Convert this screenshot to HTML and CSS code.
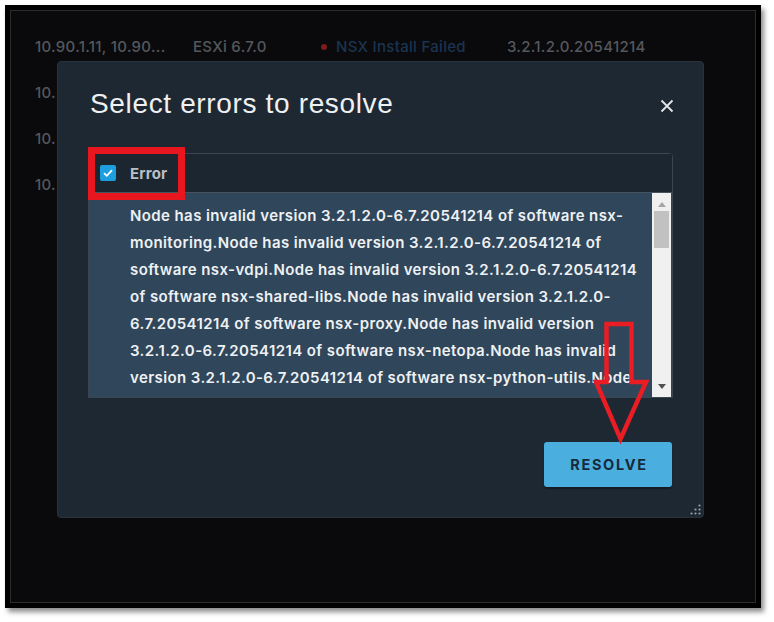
FILE: index.html
```html
<!DOCTYPE html>
<html>
<head>
<meta charset="utf-8">
<link rel="stylesheet" href="styles.css">
</head>
<body>
<div class="frame">
  <div class="screen">
    <div class="rows">
      <div class="row">
        <span class="cell">10.90.1.11, 10.90...</span>
        <span class="cell">ESXi 6.7.0</span>
        <span class="cell status"><i class="dot"></i>NSX Install Failed</span>
        <span class="cell">3.2.1.2.0.20541214</span>
      </div>
      <div class="row"><span class="cell">10.</span></div>
      <div class="row"><span class="cell">10.</span></div>
      <div class="row"><span class="cell">10.</span></div>
    </div>

    <div class="modal">
      <div class="modal-head">
        <h1 class="title">Select errors to resolve</h1>
        <svg class="close" width="14" height="14" viewBox="0 0 14 14"><path d="M1.5 1.5 L12.5 12.5 M12.5 1.5 L1.5 12.5" stroke="#e4e7ea" stroke-width="1.8" fill="none"/></svg>
      </div>
      <div class="table">
        <div class="thead">
          <span class="cb"><svg width="16" height="16" viewBox="0 0 16 16"><path d="M4 8.2 L6.8 10.8 L12 5.2" stroke="#ffffff" stroke-width="1.8" fill="none"/></svg></span>
          <span class="th">Error</span>
        </div>
        <div class="tbody">
          <p class="msg">Node has invalid version 3.2.1.2.0-6.7.20541214 of software nsx-<br>monitoring.Node has invalid version 3.2.1.2.0-6.7.20541214 of<br>software nsx-vdpi.Node has invalid version 3.2.1.2.0-6.7.20541214<br>of software nsx-shared-libs.Node has invalid version 3.2.1.2.0-<br>6.7.20541214 of software nsx-proxy.Node has invalid version<br>3.2.1.2.0-6.7.20541214 of software nsx-netopa.Node has invalid<br>version 3.2.1.2.0-6.7.20541214 of software nsx-python-utils.Node</p>
          <div class="scrollbar">
            <svg class="sb-up" width="8" height="5" viewBox="0 0 8 5"><path d="M0 5 L4 0 L8 5 Z" fill="#a6a6a6"/></svg>
            <div class="sb-track"><div class="sb-thumb"></div></div>
            <svg class="sb-down" width="8" height="5" viewBox="0 0 8 5"><path d="M0 0 L8 0 L4 5 Z" fill="#505050"/></svg>
          </div>
        </div>
      </div>
      <div class="foot">
        <button class="btn">RESOLVE</button>
      </div>

      <div class="highlight"></div>
      <svg class="arrow" width="64" height="128" viewBox="0 0 64 128"><path d="M14.5 6 L39.5 6 L39.5 64 L54 64 L28.5 121 L4 64 L14.5 64 Z" fill="none" stroke="#ea1c24" stroke-width="4.5" stroke-linejoin="miter"/></svg>
      <svg class="grip" width="14" height="14" viewBox="0 0 14 14" fill="#9aa3ab"><circle cx="11.5" cy="2.5" r="1.1"/><circle cx="7.5" cy="6.5" r="1.1"/><circle cx="11.5" cy="6.5" r="1.1"/><circle cx="3.5" cy="10.5" r="1.1"/><circle cx="7.5" cy="10.5" r="1.1"/><circle cx="11.5" cy="10.5" r="1.1"/></svg>
    </div>
  </div>
</div>
</body>
</html>
```

FILE: styles.css
```css
* { box-sizing: border-box; }
html, body { margin: 0; padding: 0; background: #ffffff; }
body { width: 774px; height: 622px; overflow: hidden; }

.frame {
  margin: 5px 0 0 5px;
  width: 756px;
  height: 603px;
  background: #000000;
  padding: 5px;
  box-shadow: 3px 4px 5px rgba(0, 0, 0, 0.45);
}
.screen {
  position: relative;
  height: 100%;
  background: #0a0a0c;
  border: 1px solid #2c2c2f;
  overflow: hidden;
  font-family: Inter, "Open Sans", sans-serif;
}

.rows { padding: 13px 0 0 24px; }
.row {
  display: grid;
  grid-template-columns: 158px 128px 186px auto;
  height: 46px;
  line-height: 46px;
  font-size: 15px;
  letter-spacing: 0.3px;
  font-weight: 500;
  color: #54585d;
  white-space: nowrap;
}
.status { color: #1a3450; display: flex; align-items: center; }
.dot {
  width: 6px; height: 6px; border-radius: 50%;
  background: #7e1b1b; margin-right: 9px;
}

.modal {
  position: absolute;
  left: 46px;
  top: 50px;
  width: 647px;
  height: 457px;
  background: #1e2832;
  border: 1px solid #28323c;
  border-radius: 4px;
  padding-top: 25px;
}
.modal-head {
  display: flex;
  align-items: center;
  justify-content: space-between;
  padding: 0 29px 0 32px;
  height: 34px;
}
.title {
  margin: 0;
  font-family: "Liberation Sans", Arial, sans-serif;
  font-weight: 400;
  font-size: 28px;
  line-height: 34px;
  letter-spacing: 0.65px;
  color: #eef0f2;
}
.close { margin-top: 4px; }

.table {
  margin: 32px 30px 0 30px;
  border: 1px solid #3a4652;
  border-radius: 4px 4px 0 0;
}
.thead {
  display: flex;
  align-items: center;
  height: 39px;
  padding-left: 11px;
  border-bottom: 1px solid #46535f;
  background: #1c2630;
}
.cb {
  width: 16px; height: 16px;
  background: #1d9fdf;
  border-radius: 2px;
  display: flex;
}
.th {
  margin-left: 14px;
  font-size: 15px;
  font-weight: 700;
  letter-spacing: 0.2px;
  color: #b9bfc6;
}
.tbody {
  display: flex;
  height: 204px;
  background: #30465a;
  overflow: hidden;
}
.msg {
  flex: 1;
  margin: 0;
  padding: 9px 0 0 41px;
  font-size: 15px;
  font-weight: 600;
  letter-spacing: 0.4px;
  line-height: 27px;
  color: #eef1f4;
  white-space: nowrap;
  overflow: hidden;
}
.scrollbar {
  width: 19px;
  margin-right: 1px;
  background: #f0f0f0;
  display: flex;
  flex-direction: column;
  align-items: center;
  padding: 9px 0 8px;
}
.sb-track { flex: 1; width: 100%; padding: 4px 2px 0; }
.sb-thumb { height: 37px; background: #c1c1c1; }

.foot {
  display: flex;
  justify-content: flex-end;
  padding-right: 31px;
  margin-top: 44px;
}
.btn {
  width: 128px;
  height: 45px;
  border: none;
  border-radius: 3px;
  background: #4aaedf;
  color: #172a3b;
  font-family: Inter, "Open Sans", sans-serif;
  font-weight: 700;
  font-size: 14.5px;
  letter-spacing: 1.7px;
  padding: 0 0 0 2px;
  box-shadow: 0 2px 1px rgba(0, 0, 0, 0.3);
}

.highlight {
  position: absolute;
  left: 30px;
  top: 85px;
  width: 97px;
  height: 53px;
  border: 7px solid #e8161f;
}
.arrow { position: absolute; left: 534px; top: 256px; }
.grip { position: absolute; left: 630px; top: 441px; }
```
